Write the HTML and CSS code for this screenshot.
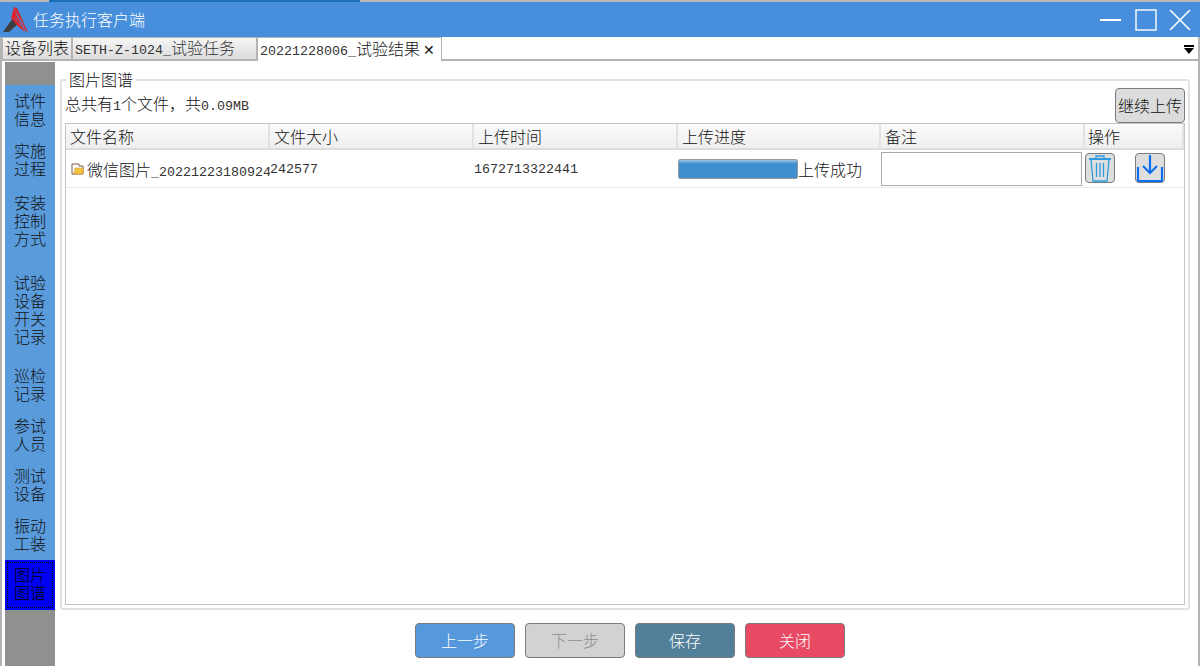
FILE: index.html
```html
<!DOCTYPE html>
<html lang="zh-CN">

<head>
    <meta charset="UTF-8" />
    <title>任务执行客户端</title>
    <link rel="stylesheet" href="styles.css">
</head>

<body>
    <div class="window">
        <div class="top-strip"><span class="strip-blue"></span></div>

        <!-- 标题栏 -->
        <header class="titlebar">
            <svg class="logo" width="26" height="27" viewBox="0 0 26 27">
                <polygon points="1,26 11,12 16,18 7,26" fill="#3d3d3f" />
                <polygon points="12,1 15,2 26,26 24,26" fill="#d8262c" />
                <polygon points="12,1 16,11 23,26 18,22 13,17 9,12" fill="#d8262c" />
                <line x1="14" y1="9" x2="26" y2="23" stroke="#478fdc" stroke-width="0.7" />
                <line x1="13" y1="12" x2="25" y2="26" stroke="#478fdc" stroke-width="0.7" />
            </svg>
            <span class="app-name">任务执行客户端</span>
            <div class="win-btns">
                <svg class="win-min" width="21" height="20" viewBox="0 0 21 20">
                    <line x1="0" y1="10" x2="21" y2="10" stroke="#fff" stroke-width="2" />
                </svg>
                <svg width="22" height="22" viewBox="0 0 22 22">
                    <rect x="1" y="1" width="20" height="20" fill="none" stroke="#e8f1fb" stroke-width="1.6" />
                </svg>
                <svg width="22" height="22" viewBox="0 0 22 22">
                    <path d="M1 1 L21 21 M21 1 L1 21" stroke="#fff" stroke-width="1.6" />
                </svg>
            </div>
        </header>

        <!-- 选项卡 -->
        <nav class="tabbar">
            <div class="tab tab-first">设备列表</div>
            <div class="tab tab-second"><span class="lat">SETH-Z-1024_</span>试验任务</div>
            <div class="tab tab-active"><span class="lat">20221228006_</span>试验结果<span class="tab-close">✕</span></div>
            <svg class="tab-menu" width="10" height="9" viewBox="0 0 10 9">
                <rect x="0" y="0" width="10" height="2" fill="#000" />
                <polygon points="0,3 10,3 5,9" fill="#000" />
            </svg>
        </nav>

        <div class="body-row">
            <!-- 左侧步骤 -->
            <aside class="sidebar">
                <div class="side-item">试件<br />信息</div>
                <div class="side-item">实施<br />过程</div>
                <div class="side-item side-3">安装<br />控制<br />方式</div>
                <div class="side-item side-4">试验<br />设备<br />开关<br />记录</div>
                <div class="side-item">巡检<br />记录</div>
                <div class="side-item">参试<br />人员</div>
                <div class="side-item">测试<br />设备</div>
                <div class="side-item">振动<br />工装</div>
                <div class="side-item side-active"><div class="focus-box">图片<br />图谱</div></div>
            </aside>

            <main class="content">
                <section class="panel">
                    <h2 class="panel-title">图片图谱</h2>
                    <div class="panel-top">
                        <span>总共有<span class="lat">1</span>个文件，共<span class="lat">0.09MB</span></span>
                        <button class="btn-upload">继续上传</button>
                    </div>

                    <div class="grid">
                        <div class="grid-head">
                            <div class="th">文件名称</div>
                            <div class="th">文件大小</div>
                            <div class="th">上传时间</div>
                            <div class="th">上传进度</div>
                            <div class="th">备注</div>
                            <div class="th th-last">操作</div>
                        </div>
                        <div class="grid-row">
                            <div class="td td-name">
                                <svg class="file-icon" width="13" height="13" viewBox="0 0 13 13">
                                    <path d="M1 12 V2 H8 V4 H12 V12 Z" fill="#fff" stroke="#7a5a3c" stroke-width="1" />
                                    <path d="M3 12 L4 6 H12.5 L11.5 12 Z" fill="#f5c542" stroke="#c9983a" stroke-width="0.6" />
                                </svg>
                                <span class="name-text">微信图片<span class="lat">_20221223180924</span></span>
                            </div>
                            <div class="td lat">242577</div>
                            <div class="td lat">1672713322441</div>
                            <div class="td td-progress">
                                <div class="progress"></div>
                                <span>上传成功</span>
                            </div>
                            <div class="td td-note"><input class="note" type="text" /></div>
                            <div class="td td-ops">
                                <button class="icon-btn" aria-label="删除">
                                    <svg width="24" height="28" viewBox="0 0 24 28">
                                        <g fill="none" stroke="#2f9be0" stroke-width="1.3">
                                            <path d="M1 5 H23" stroke-width="1.8" />
                                            <path d="M8 5 V2 H16 V5" />
                                            <path d="M3 5 L5 27 H19 L21 5" />
                                            <path d="M8.5 9 V23 M12 9 V23 M15.5 9 V23" />
                                        </g>
                                    </svg>
                                </button>
                                <button class="icon-btn" aria-label="下载">
                                    <svg width="28" height="28" viewBox="0 0 28 28">
                                        <g fill="none" stroke="#0d6ff0" stroke-width="2.2">
                                            <path d="M14 1 V19" />
                                            <path d="M7 12 L14 19 L21 12" />
                                            <path d="M2 13 V27 H26 V13" />
                                        </g>
                                    </svg>
                                </button>
                            </div>
                        </div>
                    </div>
                </section>

                <footer class="actions">
                    <button class="btn btn-prev">上一步</button>
                    <button class="btn btn-next" disabled>下一步</button>
                    <button class="btn btn-save">保存</button>
                    <button class="btn btn-close">关闭</button>
                </footer>
            </main>
        </div>
    </div>
</body>

</html>
```

FILE: styles.css
```css
* {
    box-sizing: border-box;
}

html,
body {
    margin: 0;
    height: 100%;
    overflow: hidden;
    background: #fff;
}

body {
    font-family: "Noto Sans CJK SC", "Liberation Mono", sans-serif;
    font-weight: 300;
    font-size: 16px;
    color: #111;
}

/* 半角字符 8px 宽 */
.lat {
    font-family: "Liberation Mono", monospace;
    font-weight: 400;
    font-size: 13.33px;
    color: #333;
}

.window {
    width: 1200px;
    height: 666px;
    display: flex;
    flex-direction: column;
    border-left: 2px solid #b4b4b4;
    border-right: 2px solid #b4b4b4;
}

.top-strip {
    height: 2px;
    margin: 0 -2px;
    background: #b9b9b9;
    padding-left: 49px;
}

.strip-blue {
    display: block;
    width: 311px;
    height: 2px;
    background: #1f6fb5;
}

.titlebar {
    height: 35px;
    margin: 0 -2px;
    background: #478fdc;
    display: flex;
    align-items: center;
    padding: 0 9px 0 2px;
    color: #fff;
}

.logo {
    flex: none;
}

.app-name {
    margin-left: 5px;
    line-height: 35px;
}

.win-btns {
    margin-left: auto;
    display: flex;
    align-items: center;
    gap: 12px;
}

.win-min {
    margin-right: 2px;
}

.tabbar {
    height: 24px;
    display: flex;
    align-items: flex-end;
    border-bottom: 2px solid #b4b4b4;
    position: relative;
}

.tab {
    height: 22px;
    line-height: 18px;
    white-space: nowrap;
    background: linear-gradient(#f6f6f6, #dcdcdc);
    border: 1px solid #b4b4b4;
    border-bottom: 0;
}

.tab-first {
    width: 70px;
    padding-left: 2px;
}

.tab-second {
    width: 185px;
    padding-left: 2px;
    color: #333;
}

.tab-active {
    width: 185px;
    height: 24px;
    line-height: 20px;
    padding-left: 2px;
    background: #fff;
    margin-bottom: -2px;
}

.tab-close {
    font-size: 14px;
    margin-left: 3px;
    font-family: "DejaVu Sans", sans-serif;
}

.tab-menu {
    position: absolute;
    right: 4px;
    top: 8px;
}

.body-row {
    flex: 1;
    min-height: 0;
    display: flex;
    padding-left: 3px;
}

.sidebar {
    width: 50px;
    flex: none;
    margin-top: 1px;
    padding-top: 23px;
    background: #8f918e;
}

.side-item {
    height: 50px;
    background: #5a9bdc;
    text-align: center;
    line-height: 18px;
    padding-top: 6px;
    color: #111;
}

.side-3 {
    height: 80px;
    padding-top: 8px;
}

.side-4 {
    height: 95px;
    padding-top: 8px;
}

.side-active {
    background: #0000f5;
    padding: 2px;
}

.focus-box {
    height: 46px;
    padding-top: 2px;
    border: 1px dotted #000;
    color: #000;
}

.content {
    flex: 1;
    min-width: 0;
    display: flex;
    flex-direction: column;
    padding: 18px 8px 0 5px;
}

.panel {
    height: 531px;
    flex: none;
    border: 2px solid #dfe2e6;
    border-radius: 3px;
    padding: 0 3px 3px;
    position: relative;
    display: flex;
    flex-direction: column;
}

.panel-title {
    position: absolute;
    top: -12px;
    left: 4px;
    margin: 0;
    padding: 0 3px;
    background: #fff;
    font-size: 16px;
    font-weight: 300;
    line-height: 20px;
}

.panel-top {
    height: 42px;
    flex: none;
    display: flex;
    justify-content: space-between;
    align-items: flex-end;
    padding-bottom: 4px;
    position: relative;
}

.panel-top > span {
    line-height: 22px;
    margin-bottom: 1px;
}

.btn-upload {
    position: absolute;
    top: 7px;
    right: 0;
    width: 70px;
    height: 35px;
    padding: 0 0 2px;
    background: #dcdcdc;
    border: 1px solid #7b7b7b;
    border-radius: 4px;
    font: inherit;
    color: #111;
}

.grid {
    flex: 1;
    min-height: 0;
    border: 1px solid #c4c4c4;
}

.grid-head,
.grid-row {
    display: grid;
    grid-template-columns: 204px 204px 204px 203px 204px 1fr;
}

.grid-head {
    height: 26px;
    border-bottom: 2px solid #dcdcdc;
    background: linear-gradient(#fbfbfb, #efefef);
}

.th {
    line-height: 25px;
    padding-left: 4px;
    border-right: 2px solid #e2e2e2;
}

.th-last {
    padding-left: 3px;
}

.grid-row {
    height: 38px;
    border-bottom: 1px solid #ebebeb;
}

.td {
    display: flex;
    align-items: center;
    white-space: nowrap;
    overflow: hidden;
    min-width: 0;
}

.td-name {
    padding-left: 5px;
    gap: 3px;
}

.file-icon {
    flex: none;
}

.td.lat {
    padding-top: 2px;
}

.progress {
    width: 120px;
    height: 20px;
    flex: none;
    border-radius: 2px;
    background: linear-gradient(#9dc4e6 0, #3f8ecf 22%, #3f8ecf 100%);
    border: 1px solid #9a9a9a;
}

.note {
    width: 201px;
    height: 34px;
    border: 1px solid #a9a9a9;
    outline: 0;
    background: #fff;
}

.td-ops {
    gap: 20px;
    padding-bottom: 2px;
    overflow: visible;
}

.icon-btn {
    width: 30px;
    height: 30px;
    padding: 0;
    display: flex;
    align-items: center;
    justify-content: center;
    background: #dedede;
    border: 1px solid #7b7b7b;
    border-radius: 4px;
    overflow: hidden;
}

.actions {
    display: flex;
    justify-content: center;
    gap: 10px;
    padding: 13px 0 0 10px;
}

.btn {
    width: 100px;
    height: 35px;
    padding: 0 0 2px;
    border: 1px solid #7b7b7b;
    border-radius: 4px;
    font: inherit;
    color: #fff;
}

.btn-prev {
    background: #5598dc;
}

.btn-next {
    background: #d2d2d2;
    color: #8c8c8c;
}

.btn-save {
    background: #527f99;
}

.btn-close {
    background: #e84a64;
}
```
